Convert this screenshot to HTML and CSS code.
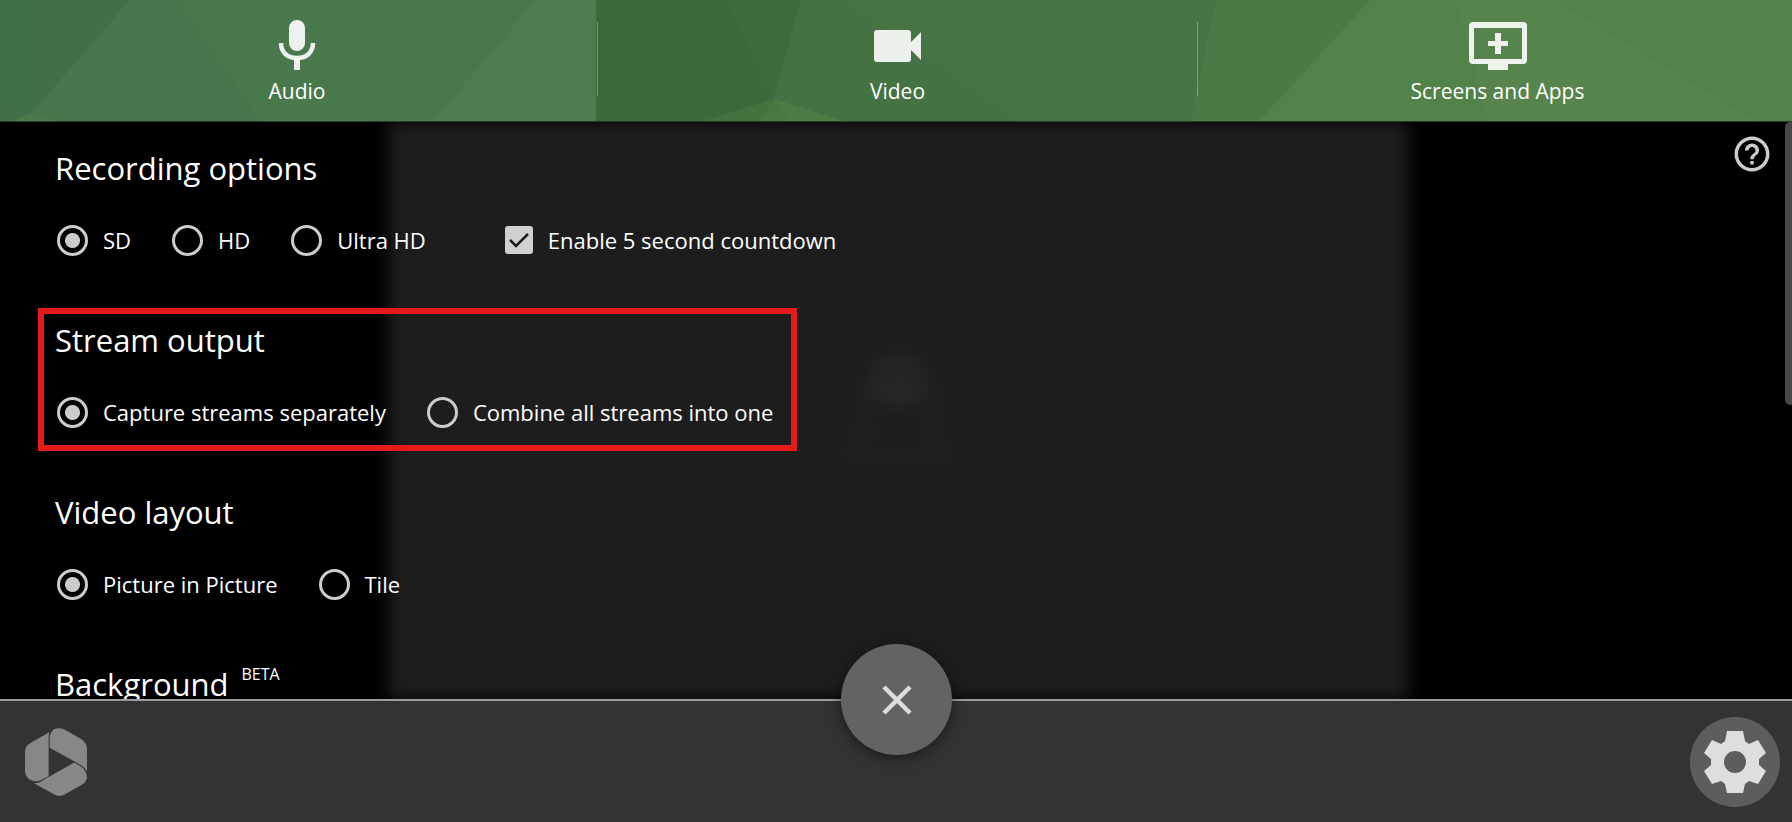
FILE: index.html
```html
<!DOCTYPE html>
<html lang="en">
<head>
<meta charset="utf-8">
<title>Capture settings</title>
<link rel="stylesheet" href="styles.css">
</head>
<body>
<div class="app">
  <header class="tabs">
    <svg class="tabs-art" viewBox="0 0 1792 121" preserveAspectRatio="none" aria-hidden="true">
      <rect width="1792" height="121" fill="#48784c"/>
      <path fill="#3f6f49" d="M0 0H30L32 113L0 99z"/>
      <path fill="#426f4a" d="M30 0H130L32 113z"/>
      <path fill="#48764c" d="M130 0H179L260 121H58L32 113z"/>
      <path fill="#426f4a" d="M0 99L32 113L12 121H0z"/>
      <path fill="#4a7a4a" d="M12 121L32 113L58 121z"/>
      <path fill="#4f7b50" d="M535 0H596V121H433z"/>
      <path fill="#3b693a" d="M596 0H727L774 99L704 121H596z"/>
      <path fill="#3d6c3c" d="M727 0H801L774 99z"/>
      <path fill="#447242" d="M801 0H844L1020 121H842L774 99z"/>
      <path fill="#467442" d="M844 0H1216L1190 121H1020z"/>
      <path fill="#44733f" d="M704 121L774 99L760 121z"/>
      <path fill="#4a7843" d="M760 121L774 99L788 121z"/>
      <path fill="#4e7c45" d="M788 121L774 99L842 121z"/>
      <path fill="#4c7945" d="M1216 0H1370L1259 121H1190z"/>
      <path fill="#53814a" d="M1370 0H1455L1488 121H1259z"/>
      <path fill="#57844c" d="M1455 0H1555L1757 121H1488z"/>
      <path fill="#54814a" d="M1555 0H1792V121H1757z"/>
    </svg>
    <nav class="tab-list">
      <button class="tab" type="button">
        <svg class="tab-icon" viewBox="0 0 58 52" aria-hidden="true">
          <rect x="21" y="1" width="16" height="31" rx="8" fill="currentColor"/>
          <path d="M13 24C13 34 20 39 29 39S45 34 45 24" fill="none" stroke="currentColor" stroke-width="4.500"/>
          <path d="M26 40H32V51H26z" fill="currentColor"/>
        </svg>
        Audio
      </button>
      <button class="tab" type="button">
        <svg class="tab-icon" viewBox="0 0 58 52" aria-hidden="true">
          <path d="M8 11H39a3 3 0 0 1 3 3V23L52 13V41L42 31V40a3 3 0 0 1-3 3H8a3 3 0 0 1-3-3V14a3 3 0 0 1 3-3z" fill="currentColor"/>
        </svg>
        Video
      </button>
      <button class="tab" type="button">
        <svg class="tab-icon" viewBox="0 0 58 52" aria-hidden="true">
          <path fill-rule="evenodd" d="M4 3H54a4 4 0 0 1 4 4V41a4 4 0 0 1-4 4H39V51H19V45H4a4 4 0 0 1-4-4V7a4 4 0 0 1 4-4zM5 9V40H53V9z" fill="currentColor"/>
          <path d="M26 14H32V22H39V27H32V35H26V27H19V22H26z" fill="currentColor"/>
        </svg>
        Screens and Apps
      </button>
    </nav>
  </header>

  <main class="panel">
    <div class="preview" aria-hidden="true">
      <svg class="preview-figure" viewBox="0 0 112 120">
        <ellipse cx="56" cy="30" rx="32" ry="26" fill="#272727"/>
        <path d="M20 50V78L8 106H104L92 78V50Q92 26 56 22Q20 26 20 50" fill="none" stroke="#222" stroke-width="10"/>
        <path d="M20 80H92" stroke="#222" stroke-width="6"/>
      </svg>
    </div>

    <form class="settings">
      <section class="group">
        <h2 class="group-title">Recording options</h2>
        <div class="options">
          <label class="option"><input class="radio" type="radio" name="quality" checked>SD</label>
          <label class="option"><input class="radio" type="radio" name="quality">HD</label>
          <label class="option"><input class="radio" type="radio" name="quality">Ultra HD</label>
          <label class="option option-apart">
            <span class="check">
              <input class="checkbox" type="checkbox" checked>
              <svg class="check-mark" viewBox="0 0 28 28" aria-hidden="true"><path d="M5 14L11 20L23 8" fill="none" stroke="#1d1d1d" stroke-width="2.500"/></svg>
            </span>Enable 5 second countdown</label>
        </div>
      </section>
      <section class="group group-marked">
        <h2 class="group-title">Stream output</h2>
        <div class="options">
          <label class="option"><input class="radio" type="radio" name="output" checked>Capture streams separately</label>
          <label class="option"><input class="radio" type="radio" name="output">Combine all streams into one</label>
        </div>
      </section>
      <section class="group">
        <h2 class="group-title">Video layout</h2>
        <div class="options">
          <label class="option"><input class="radio" type="radio" name="layout" checked>Picture in Picture</label>
          <label class="option"><input class="radio" type="radio" name="layout">Tile</label>
        </div>
      </section>
      <section class="group">
        <h2 class="group-title">Background<span class="beta">BETA</span></h2>
      </section>
    </form>

    <button class="help" type="button" aria-label="Help">
      <svg viewBox="0 0 24 24" aria-hidden="true"><path fill="currentColor" d="M11 18h2v-2h-2v2zm1-16C6.480 2 2 6.480 2 12s4.480 10 10 10 10-4.480 10-10S17.520 2 12 2zm0 18c-4.410 0-8-3.590-8-8s3.590-8 8-8 8 3.590 8 8-3.590 8-8 8zm0-14c-2.210 0-4 1.790-4 4h2c0-1.100.9-2 2-2s2 .9 2 2c0 2-3 1.750-3 5h2c0-2.250 3-2.500 3-5 0-2.210-1.790-4-4-4z"/></svg>
    </button>
    <div class="scroll-thumb"></div>
  </main>

  <footer class="bar">
    <svg class="logo" viewBox="0 0 64 70" role="img" aria-label="Studio logo">
      <path fill="#878787" d="M25 4Q24 6 24 9V49L16 53C9 56 0 52 0 43V24Q0 18 6 15z"/>
      <path fill="#878787" d="M25 20V9Q26 4 30 1Q36-1 41 2L57 11Q63 15 63 21V44Q60 39 54 36z"/>
      <path fill="#878787" d="M9 56Q15 56 20 52L50 35L57 39Q63 44 63 51Q61 56 57 58L41 67Q35 71 29 67z"/>
    </svg>
    <button class="close" type="button" aria-label="Close settings">
      <svg viewBox="0 0 32 32" aria-hidden="true"><path d="M3 3L29 29M29 3L3 29" stroke="currentColor" stroke-width="4.500"/></svg>
    </button>
    <button class="gear" type="button" aria-label="Settings">
      <svg viewBox="0 0 62 62" aria-hidden="true">
        <path fill="currentColor" fill-rule="evenodd" d="M23 0H39L41 10L45 13L54 9L62 22L55 28V34L62 40L54 53L45 50L41 53L39 62H23L21 53L17 50L8 53L0 40L7 34V28L0 22L8 9L17 13L21 10zM31 20a11 11 0 1 0 0 22a11 11 0 1 0 0-22z"/>
      </svg>
    </button>
  </footer>
</div>
</body>
</html>
```
FILE: styles.css
```css
* {
  box-sizing: border-box;
}

body {
  margin: 0;
  background: #000;
  color: #fff;
  font-family: "Open Sans", "Noto Sans", sans-serif;
  font-size: 22px;
}

button {
  margin: 0;
  padding: 0;
  border: 0;
  background: none;
  color: inherit;
  font: inherit;
  cursor: pointer;
}

.app {
  display: grid;
  grid-template-rows: auto minmax(0, 1fr) auto;
  height: 100vh;
  overflow: hidden;
}

/* Top tabs */
.tabs {
  position: relative;
  overflow: hidden;
  border-bottom: 1px solid #2c3b2c;
}

.tabs-art {
  position: absolute;
  inset: 0;
  width: 100%;
  height: 100%;
}

.tab-list {
  position: relative;
  display: grid;
  grid-template-columns: repeat(3, 1fr);
  margin: 0 -5px 0 -3px;
  padding: 22px 0 25px;
}

.tab {
  display: flex;
  flex-direction: column;
  align-items: center;
  height: 74px;
  font-size: 21px;
  line-height: 28px;
}

.tab + .tab {
  border-left: 1px solid rgba(255, 255, 255, 0.3);
}

.tab-icon {
  flex: none;
  width: 58px;
  height: 52px;
  margin-top: -3px;
  margin-bottom: 6px;
  color: rgba(255, 255, 255, 0.9);
}

/* Settings panel */
.panel {
  position: relative;
  overflow: hidden;
}

.preview {
  position: absolute;
  inset: 0 384px 0 388px;
  display: grid;
  place-items: center;
  background: #1d1d1d;
  filter: blur(8px);
}

.preview-figure {
  width: 112px;
  height: 120px;
}

.settings {
  position: relative;
  display: flex;
  flex-direction: column;
  align-items: flex-start;
  gap: 60px;
  padding: 22px 55px 0;
}

.group {
  position: relative;
  display: flex;
  flex-direction: column;
  gap: 32px;
}

.group-marked::after {
  content: "";
  position: absolute;
  inset: -8px -24px -23px -17px;
  border: 6px solid #e51b1b;
  pointer-events: none;
}

.group-title {
  display: flex;
  gap: 13px;
  margin: 0;
  font-size: 31px;
  font-weight: 400;
  line-height: 48px;
}

.beta {
  font-size: 16px;
  line-height: 28px;
}

.options {
  display: flex;
  gap: 41px;
  padding-left: 2px;
}

.option {
  display: flex;
  align-items: center;
  gap: 15px;
  line-height: 32px;
}

.option-apart {
  margin-left: 38px;
}

.radio {
  appearance: none;
  flex: none;
  width: 31px;
  height: 31px;
  margin: 0;
  border: 3px solid #ccc;
  border-radius: 50%;
}

.radio:checked {
  background: radial-gradient(circle, #ccc 7px, transparent 8px);
}

.check {
  display: grid;
  width: 28px;
  height: 28px;
}

.checkbox,
.check-mark {
  grid-area: 1 / 1;
  width: 28px;
  height: 28px;
  margin: 0;
}

.checkbox {
  appearance: none;
  border-radius: 3px;
}

.checkbox:checked {
  background: #d0d0d0;
}

.help {
  position: absolute;
  top: 11px;
  right: 19px;
  width: 42px;
  height: 42px;
  color: #ccc;
}

.help svg {
  display: block;
}

.scroll-thumb {
  position: absolute;
  top: 0;
  right: 0;
  width: 7px;
  height: 49%;
  border-radius: 5px 0 0 5px;
  background: #474747;
}

/* Bottom bar */
.bar {
  position: relative;
  display: flex;
  align-items: center;
  justify-content: space-between;
  padding: 16px 12px 15px 25px;
  border-top: 2px solid #9c9c9c;
  background: #333;
}

.logo {
  width: 63px;
  height: 69px;
}

.close {
  position: absolute;
  top: -57px;
  left: 50%;
  display: grid;
  place-items: center;
  width: 111px;
  height: 111px;
  margin-left: -55px;
  border-radius: 50%;
  background: #636363;
  box-shadow: 0 3px 14px rgba(0, 0, 0, 0.5);
  color: #dedede;
}

.close svg {
  width: 32px;
  height: 32px;
}

.gear {
  display: grid;
  place-items: center;
  width: 90px;
  height: 90px;
  border-radius: 50%;
  background: #5d5d5d;
  color: #dedede;
}

.gear svg {
  width: 62px;
  height: 62px;
}
```
